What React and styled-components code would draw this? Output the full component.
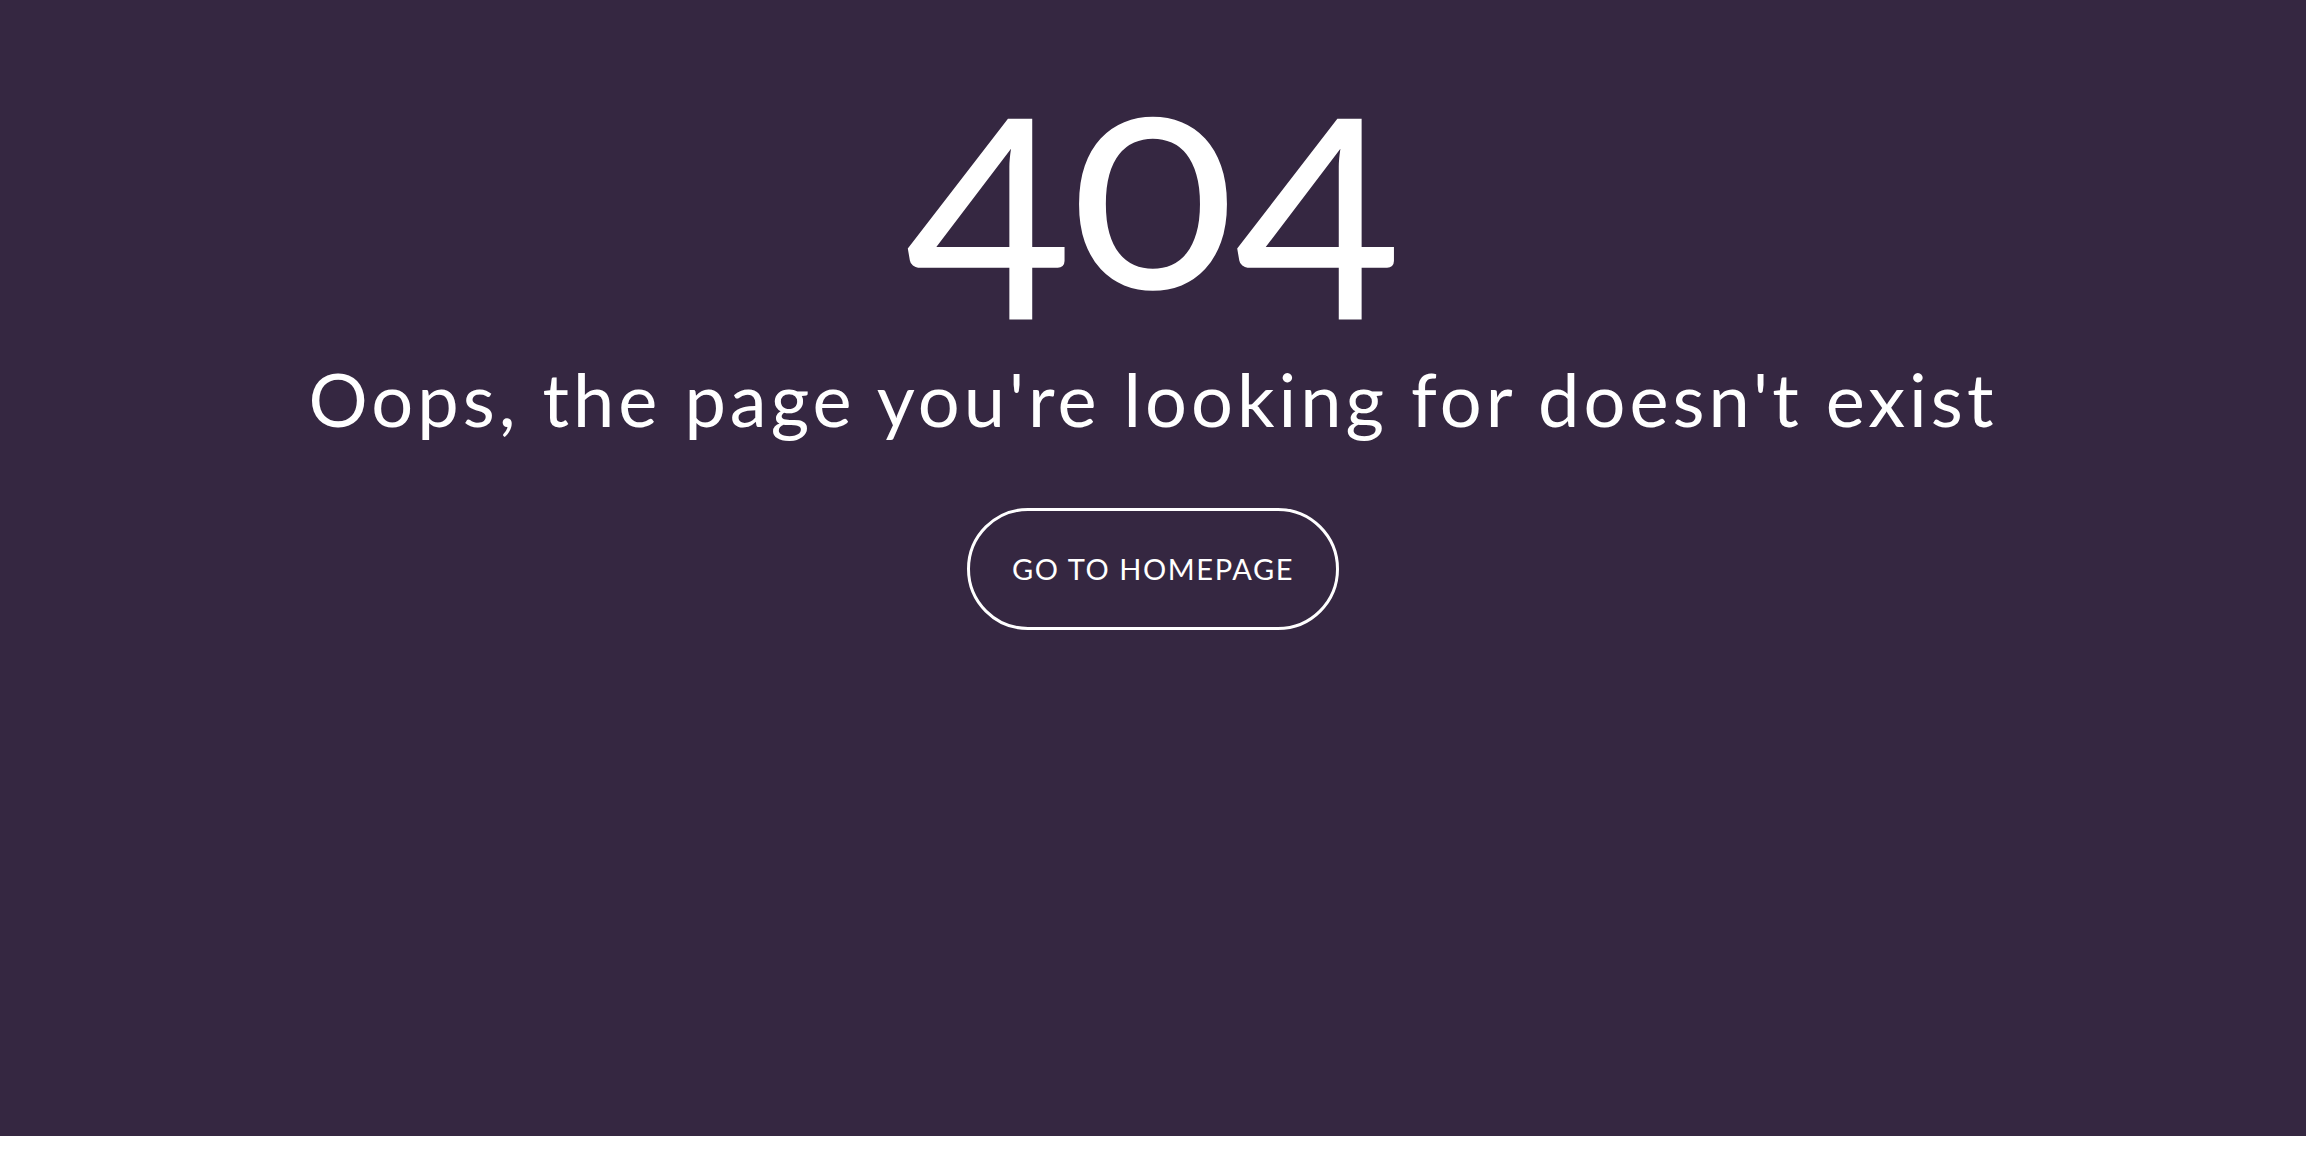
import React from 'react'
import styled, { createGlobalStyle } from 'styled-components'

const Global = createGlobalStyle`
  body {
    margin: 0;
    background: #fff;
    font-family: "Lato", "Liberation Sans", sans-serif;
  }
`

const Page = styled.section`
  height: 1136px;
  background: #352741;
  color: #fff;
  display: flex;
  flex-direction: column;
  align-items: center;
  padding-top: 4px;
  box-sizing: border-box;
`

const Code = styled.h1`
  margin: 0;
  font-size: 305px;
  font-weight: 400;
  line-height: 1.1;
  font-variant-numeric: oldstyle-nums;
`

const Message = styled.h2`
  margin: 22px 0 0;
  font-size: 74px;
  font-weight: 400;
  line-height: 1;
  letter-spacing: 4px;
`

const HomeButton = styled.a`
  margin-top: 72px;
  height: 122px;
  box-sizing: border-box;
  display: inline-flex;
  align-items: center;
  padding: 0 42px;
  border: 3px solid #fff;
  border-radius: 61px;
  color: #fff;
  text-decoration: none;
  font-size: 29px;
  font-weight: 400;
  letter-spacing: 1.6px;
  text-transform: uppercase;
  cursor: pointer;
`

export default function App() {
  return (
    <>
      <Global />
      <Page>
        <Code>404</Code>
        <Message>Oops, the page you're looking for doesn't exist</Message>
        <HomeButton href="#">Go to homepage</HomeButton>
      </Page>
    </>
  )
}
